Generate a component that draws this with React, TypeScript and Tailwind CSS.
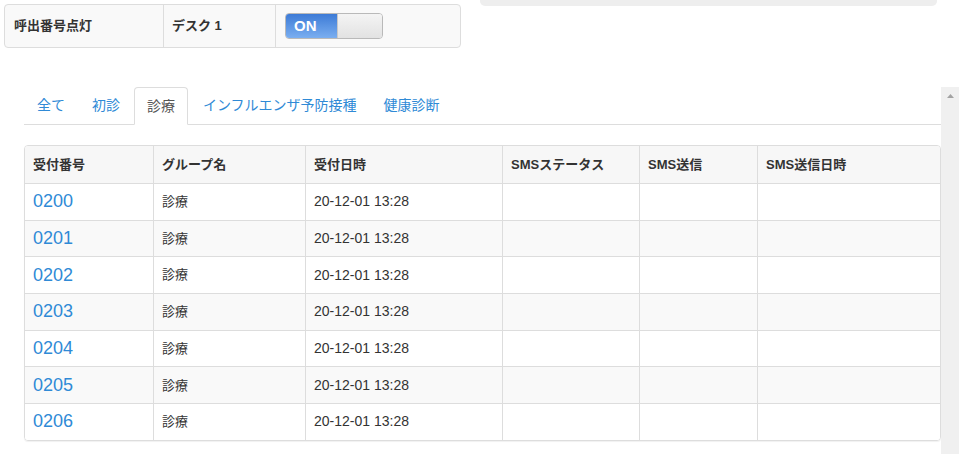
import React from "react";

const tabs = ["全て", "初診", "診療", "インフルエンザ予防接種", "健康診断"];
const active = "診療";

const cols = [
  { label: "受付番号", w: "w-[129px]" },
  { label: "グループ名", w: "w-[152px]" },
  { label: "受付日時", w: "w-[197px]" },
  { label: "SMSステータス", w: "w-[137px]" },
  { label: "SMS送信", w: "w-[118px]" },
  { label: "SMS送信日時", w: "flex-1" },
];

const rows = ["0200", "0201", "0202", "0203", "0204", "0205", "0206"].map((no) => ({
  no,
  group: "診療",
  at: "20-12-01 13:28",
}));

function Toggle() {
  return (
    <div className="flex h-[26px] w-[98px] overflow-hidden rounded-[4px] border border-[#b9b9b9]">
      <div className="flex w-[51px] items-center bg-gradient-to-b from-[#3d7bd6] to-[#7aaef0] pl-[8px] text-[15px] font-bold text-white">
        ON
      </div>
      <div className="flex-1 border-l border-[#c8c8c8] bg-gradient-to-b from-[#f4f4f4] to-[#e2e2e2]" />
    </div>
  );
}

function TopPanel() {
  return (
    <div className="ml-[4px] mt-[4px] flex h-[44px] w-[457px] rounded-[4px] border border-[#dddddd] bg-[#f9f9f9] text-[13px] text-[#333]">
      <div className="flex w-[159px] items-center border-r border-[#dddddd] pl-[9px] font-bold">呼出番号点灯</div>
      <div className="flex w-[112px] items-center border-r border-[#dddddd] pl-[8px] font-bold">デスク 1</div>
      <div className="flex flex-1 items-center pl-[9px]">
        <Toggle />
      </div>
    </div>
  );
}

function Tabs() {
  return (
    <ul className="flex h-[38px] border-b border-[#dddddd] text-[14px]">
      {tabs.map((t) =>
        t === active ? (
          <li
            key={t}
            className="mr-[2px] -mb-px flex items-center rounded-t-[4px] border border-b-white border-[#dddddd] bg-white px-[12px] text-[#555]"
          >
            {t}
          </li>
        ) : (
          <li key={t} className="mr-[1px] flex items-center border border-transparent px-[12px] text-[#2f8ad6]">
            {t}
          </li>
        )
      )}
    </ul>
  );
}

function DataTable() {
  return (
    <div className="mt-[20px] overflow-hidden rounded-[4px] border border-[#dddddd] shadow-[0_1px_1px_rgba(0,0,0,0.06)]">
      <div className="flex h-[37px] bg-[#f7f7f7] text-[13px] font-bold text-[#333]">
        {cols.map((c, i) => (
          <div
            key={c.label}
            className={`${c.w} flex items-center pl-[8px] ${i < cols.length - 1 ? "border-r border-[#dddddd]" : ""}`}
          >
            {c.label}
          </div>
        ))}
      </div>
      {rows.map((r, ri) => (
        <div
          key={r.no}
          className={`flex h-[36.7px] border-t border-[#dddddd] text-[#333] ${ri % 2 === 1 ? "bg-[#f9f9f9]" : "bg-white"}`}
        >
          <div className="flex w-[129px] items-center border-r border-[#dddddd] pl-[8px] text-[18px] text-[#2f8ad6]">
            {r.no}
          </div>
          <div className="flex w-[152px] items-center border-r border-[#dddddd] pl-[8px] text-[13px]">{r.group}</div>
          <div className="flex w-[197px] items-center border-r border-[#dddddd] pl-[8px] text-[14px]">{r.at}</div>
          <div className="w-[137px] border-r border-[#dddddd]" />
          <div className="w-[118px] border-r border-[#dddddd]" />
          <div className="flex-1" />
        </div>
      ))}
    </div>
  );
}

export default function App() {
  return (
    <div
      className="h-[455px] w-[980px] overflow-hidden bg-white"
      style={{ fontFamily: '"Liberation Sans", "Noto Sans CJK JP", sans-serif' }}
    >
      <div className="flex items-start">
        <TopPanel />
        <div className="ml-[19px] h-[6px] w-[457px] rounded-b-[5px] bg-[#eeeeee]" />
      </div>
      <div className="mt-[39px] flex h-[367px]">
        <div className="ml-[24px] w-[917px]">
          <Tabs />
          <DataTable />
        </div>
        <div className="flex w-[18px] justify-center bg-[#f0f0f0] pt-[7px]">
          <svg width="7" height="4" viewBox="0 0 7 4">
            <path d="M3.5 0 L7 4 L0 4 Z" fill="#a3a3a3" />
          </svg>
        </div>
      </div>
    </div>
  );
}
